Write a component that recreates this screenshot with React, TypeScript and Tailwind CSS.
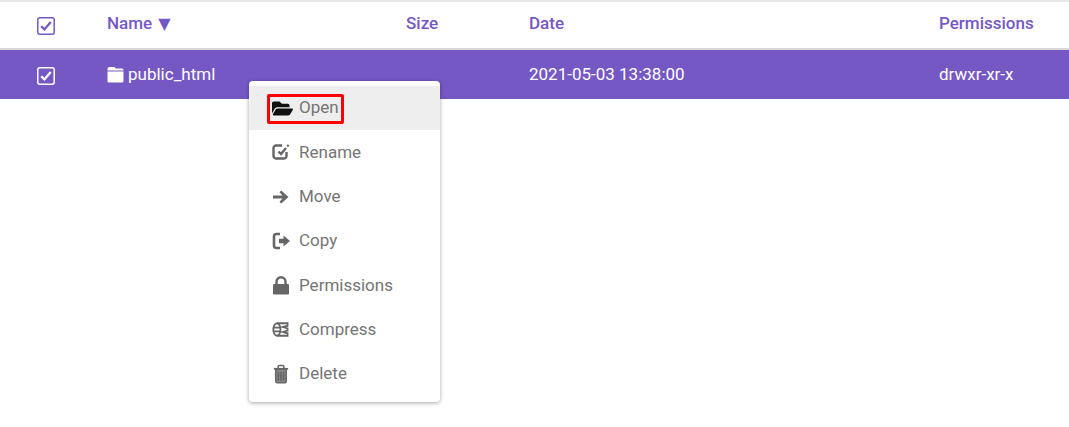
import React from 'react';
import { FaFolderOpen } from 'react-icons/fa';

function CheckBox({ color }: { color: string }) {
  return (
    <svg width="18" height="18" viewBox="0 0 18 18" fill="none" stroke={color}>
      <rect x="0.8" y="0.8" width="16.4" height="16.4" rx="2" strokeWidth="1.5" />
      <path d="M4.2 9.2l3.2 3.2 6.4-7.4" strokeWidth="2.3" />
    </svg>
  );
}

function FolderIcon() {
  return (
    <svg width="17" height="17" viewBox="0 0 17 17" fill="#fff">
      <path d="M2.5 1h5l1.2 1.5H15a1.5 1.5 0 0 1 1.5 1.5v.5H.5V3a2 2 0 0 1 2-2z" />
      <path d="M.5 5.500h16V15a1.500 1.500 0 0 1-1.500 1.500H2A1.500 1.500 0 0 1 .5 15z" />
    </svg>
  );
}

function RenameIcon() {
  return (
    <svg width="18" height="18" viewBox="0 0 18 18" fill="none" stroke="#666">
      <path d="M10 2.500H4A2.500 2.500 0 0 0 1.500 5v8A2.500 2.500 0 0 0 4 15.500h8a2.500 2.500 0 0 0 2.500-2.500V9" strokeWidth="2.400" />
      <path d="M6.500 8.500l2.500 2.500 5-6" strokeWidth="2.400" />
      <path d="M15.200 3.500l1.400-1.600" strokeWidth="2" />
    </svg>
  );
}

function MoveIcon() {
  return (
    <svg width="18" height="18" viewBox="0 0 18 18" fill="#666">
      <path d="M1 7.500h9.500L7.500 4.200 9.200 2.600 16.500 9l-7.300 6.400-1.700-1.600 3-3.300H1z" />
    </svg>
  );
}

function CopyIcon() {
  return (
    <svg width="19" height="18" viewBox="0 0 19 18" fill="none" stroke="#666">
      <path d="M8 2H4.500A2.500 2.500 0 0 0 2 4.500v9A2.500 2.500 0 0 0 4.500 16H8" strokeWidth="2.600" />
      <path d="M7 6.800h4.500V3.500L18 9l-6.500 5.500V11.200H7z" fill="#666" stroke="none" />
    </svg>
  );
}

function LockIcon() {
  return (
    <svg width="18" height="19" viewBox="0 0 18 19" fill="none" stroke="#666">
      <rect x="1" y="8" width="16" height="10.500" rx="1.200" fill="#666" stroke="none" />
      <path d="M4.500 9V5.800a4.500 4.500 0 0 1 9 0V9" strokeWidth="2.400" />
    </svg>
  );
}

function CompressIcon() {
  return (
    <svg width="17" height="17" viewBox="0 0 18 18" fill="none" stroke="#666" strokeWidth="1.900">
      <ellipse cx="5.200" cy="9" rx="3.800" ry="6.500" />
      <path d="M1.500 7h7M1.500 11h7" />
      <path d="M5 2.400h11.500v2.600l-5 1.400 5 1.500v2.200l-5 1.500 5 1.400v2.600H5" />
    </svg>
  );
}

function TrashIcon() {
  return (
    <svg width="18" height="20" viewBox="0 0 18 21" fill="none" stroke="#666">
      <path d="M1.500 5h15" strokeWidth="1.800" />
      <path d="M6 4.500V2.700a1.200 1.200 0 0 1 1.200-1.200h3.600A1.200 1.200 0 0 1 12 2.700v1.800" strokeWidth="1.600" />
      <path d="M3.500 5.500h11V18a1.800 1.800 0 0 1-1.800 1.800H5.300A1.800 1.800 0 0 1 3.500 18z" fill="#8a8a8a" strokeWidth="1.600" />
      <path d="M6.300 8v9.500M9 8v9.500M11.700 8v9.500" strokeWidth="1.800" />
    </svg>
  );
}

const menuItems = [
  { label: 'Open', icon: <FaFolderOpen size={21} color="#111" />, active: true },
  { label: 'Rename', icon: <RenameIcon /> },
  { label: 'Move', icon: <MoveIcon /> },
  { label: 'Copy', icon: <CopyIcon /> },
  { label: 'Permissions', icon: <LockIcon /> },
  { label: 'Compress', icon: <CompressIcon /> },
  { label: 'Delete', icon: <TrashIcon /> },
];

export default function App() {
  return (
    <div className="relative w-[1069px] h-[427px] overflow-hidden bg-white font-['Roboto',sans-serif] text-[17px]">
      <div className="h-[2px] bg-[#e8e8e8]" />
      <div className="flex h-[46px] items-center text-[#7558c4] font-medium">
        <div className="w-[107px] pl-[37px] flex pt-[1px]">
          <CheckBox color="#7558c4" />
        </div>
        <div className="w-[299px] flex items-center gap-[6px] -mt-[3px]">
          Name <span className="font-['DejaVu_Sans',sans-serif] text-[16px] leading-none">▼</span>
        </div>
        <div className="w-[123px] -mt-[3px]">Size</div>
        <div className="w-[410px] -mt-[3px]">Date</div>
        <div className="-mt-[3px]">Permissions</div>
      </div>
      <div className="h-[2px] bg-[#d9d9d9]" />
      <div className="flex h-[49px] items-center bg-[#7558c4] text-white">
        <div className="w-[107px] pl-[37px] flex pt-[3px]">
          <CheckBox color="#fff" />
        </div>
        <div className="w-[422px] flex items-center gap-[4px]">
          <FolderIcon />
          public_html
        </div>
        <div className="w-[410px]">2021-05-03 13:38:00</div>
        <div>drwxr-xr-x</div>
      </div>

      <div className="absolute left-[249px] top-[81px] w-[191px] h-[321px] bg-white rounded-[4px] shadow-[0_1px_4px_rgba(0,0,0,0.35)] py-[5px]">
        {menuItems.map((item) => (
          <div
            key={item.label}
            className={`relative flex h-[44.3px] items-center pl-[23px] text-[#757575] ${item.active ? 'bg-[#eeeeee]' : ''}`}
          >
            <span className="w-[27px] flex">{item.icon}</span>
            {item.label}
            {item.active && (
              <span className="absolute left-[18px] top-[8px] w-[77px] h-[30px] border-[3px] border-[#ff0000] rounded-[2px]" />
            )}
          </div>
        ))}
      </div>
    </div>
  );
}
